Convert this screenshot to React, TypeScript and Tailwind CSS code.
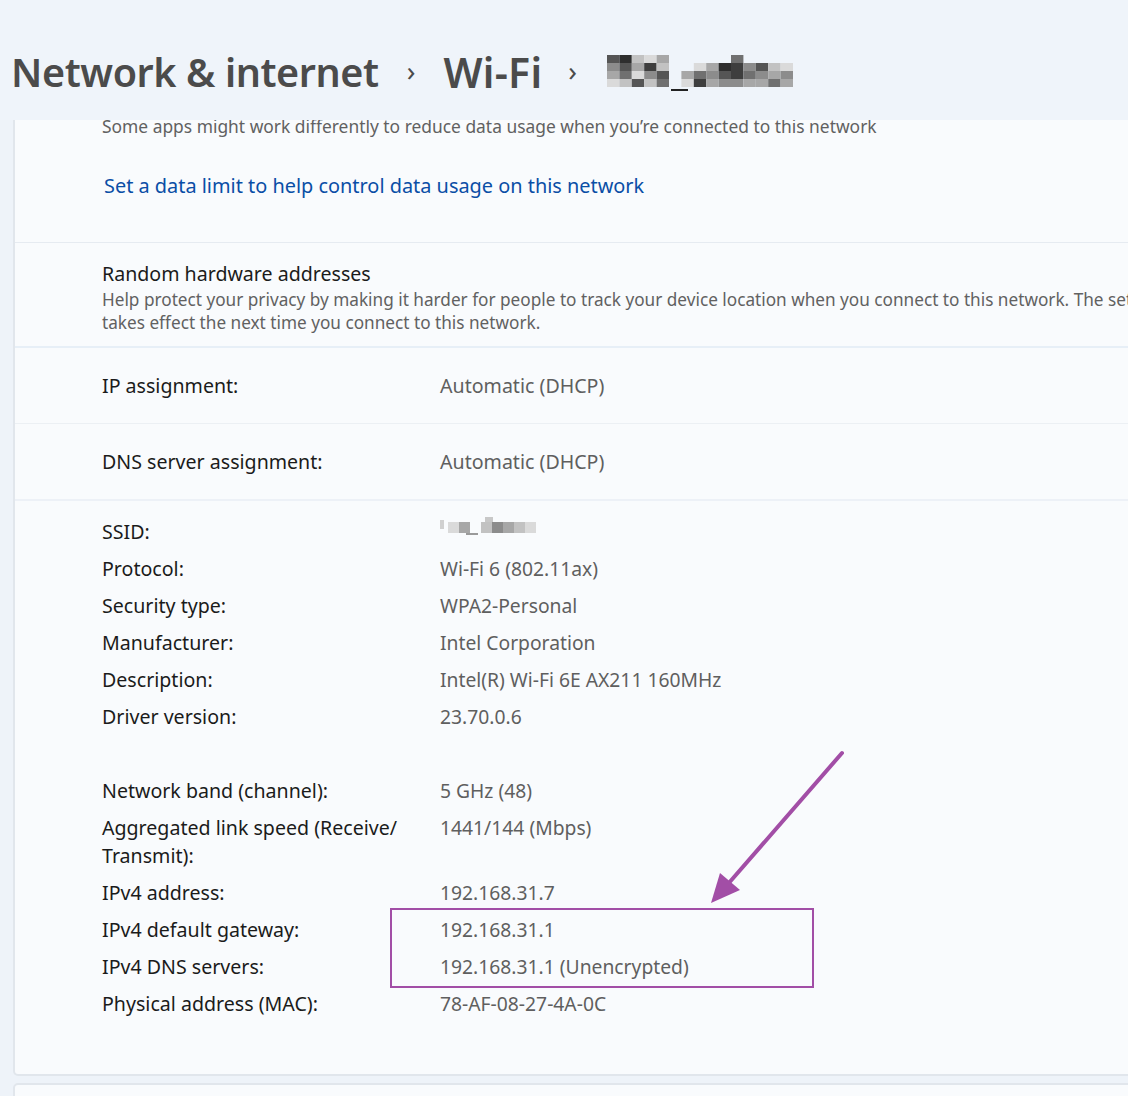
import React from 'react';

const font = { fontFamily: '"Noto Sans", "Open Sans", sans-serif' };

// Blurred SSID mosaics, each cell a shade of gray (0 = empty)
const titleMosaic = [
  [3, 1, 7, 8, 6, 0, 0, 0, 0, 0, 4, 0, 0, 0, 0],
  [5, 3, 6, 2, 7, 0, 0, 8, 6, 1, 2, 5, 3, 7, 8],
  [6, 4, 8, 5, 3, 0, 6, 4, 5, 3, 2, 4, 5, 6, 5],
  [8, 7, 3, 7, 4, 0, 8, 2, 6, 5, 5, 6, 6, 4, 6],
];

const shade = (v: number) => ['', '#2e2e2e', '#3e3e3e', '#555', '#707070', '#8c8c8c', '#a7a7a7', '#c2c2c2', '#dadada'][v];

function Mosaic() {
  return (
    <svg width="190" height="44" viewBox="0 0 190 44">
      {titleMosaic.map((row, r) =>
        row.map((v, c) =>
          v ? <rect key={`${r}-${c}`} x={c * 12.4} y={4 + r * 8} width="12.4" height="8" fill={shade(v)} /> : null
        )
      )}
      <rect x="64" y="38" width="17" height="2" fill="#222" />
    </svg>
  );
}

function SmallMosaic() {
  const cells = [8, 6, 0, 7, 5, 6, 7, 8];
  return (
    <svg width="100" height="22" viewBox="0 0 100 22" className="mt-[-2px]">
      <rect x="0" y="4" width="4" height="9" fill="#d0d0d0" />
      {cells.map((v, i) =>
        v ? <rect key={i} x={8 + i * 11} y={6} width="11" height="11" fill={shade(v)} /> : null
      )}
      <rect x="26" y="17" width="12" height="2" fill="#9a9a9a" />
      <rect x="45" y="1" width="8" height="5" fill="#c8c8c8" />
    </svg>
  );
}

const props1 = [
  ['SSID:', null],
  ['Protocol:', 'Wi-Fi 6 (802.11ax)'],
  ['Security type:', 'WPA2-Personal'],
  ['Manufacturer:', 'Intel Corporation'],
  ['Description:', 'Intel(R) Wi-Fi 6E AX211 160MHz'],
  ['Driver version:', '23.70.0.6'],
];

const props2 = [
  ['Network band (channel):', '5 GHz (48)'],
  ['Aggregated link speed (Receive/ Transmit):', '1441/144 (Mbps)'],
  ['IPv4 address:', '192.168.31.7'],
  ['IPv4 default gateway:', '192.168.31.1'],
  ['IPv4 DNS servers:', '192.168.31.1 (Unencrypted)'],
  ['Physical address (MAC):', '78-AF-08-27-4A-0C'],
];

function PropRow({ label, value }: { label: string; value: string | null }) {
  return (
    <div className="flex text-[19.6px] leading-[28px] py-[4.5px]">
      <div className="w-[338px] shrink-0 pr-6 text-[#1b1b1b]">{label}</div>
      <div className="text-[19.3px] text-[#5f5f5f]">{value ?? <SmallMosaic />}</div>
    </div>
  );
}

export default function App() {
  return (
    <div className="w-[1128px] h-[1096px] overflow-hidden bg-[#eef3f9] relative" style={font}>
      {/* Breadcrumb header */}
      <div className="h-[120px] flex items-center pl-[11px] pt-[26px] relative z-10 bg-[#eff4fa]">
        <span className="text-[39.5px] font-semibold text-[#4b4b4b] tracking-[-0.4px]">Network &amp; internet</span>
        <span className="text-[28px] text-[#4b4b4b] ml-[28px] mr-[28px] -mt-[6px]">›</span>
        <span className="text-[41px] font-semibold text-[#4b4b4b] tracking-[0.3px]">Wi-Fi</span>
        <span className="text-[28px] text-[#4b4b4b] ml-[26px] mr-[30px] -mt-[6px]">›</span>
        <Mosaic />
      </div>

      {/* Card content, its top scrolled under the header */}
      <div className="ml-[13px] -mt-[12px] border-l-2 border-r-2 border-b-2 border-[#e1e6ec] rounded-b-[5px] bg-[#f9fbfd] w-[1130px]">
        {/* Metered connection section */}
        <div className="pl-[87px] pt-[6px] h-[135px] border-b border-[#e6ebf1]">
          <p className="text-[17.4px] leading-[24px] text-[#616161] whitespace-nowrap">
            Some apps might work differently to reduce data usage when you’re connected to this network
          </p>
          <p className="mt-[36px] ml-[2px] text-[19.9px] leading-[24px] text-[#0a4ea6]">
            Set a data limit to help control data usage on this network
          </p>
        </div>

        {/* Random hardware addresses */}
        <div className="pl-[87px] h-[105px] pt-[18px] border-b-2 border-[#e7eff7]">
          <p className="text-[19.6px] leading-[26px] text-[#1b1b1b]">Random hardware addresses</p>
          <p className="mt-[1px] text-[17.2px] leading-[23px] text-[#616161] whitespace-nowrap">
            Help protect your privacy by making it harder for people to track your device location when you connect to this network. The setting
          </p>
          <p className="text-[17.2px] leading-[23px] text-[#616161]">takes effect the next time you connect to this network.</p>
        </div>

        {/* IP assignment */}
        <div className="pl-[87px] h-[76px] flex items-center border-b border-[#ecf0f4]">
          <div className="w-[338px] text-[19.6px] text-[#1b1b1b]">IP assignment:</div>
          <div className="text-[19.6px] text-[#5f5f5f]">Automatic (DHCP)</div>
        </div>

        {/* DNS server assignment */}
        <div className="pl-[87px] h-[77px] flex items-center border-b-2 border-[#edf1f7]">
          <div className="w-[338px] text-[19.6px] text-[#1b1b1b]">DNS server assignment:</div>
          <div className="text-[19.6px] text-[#5f5f5f]">Automatic (DHCP)</div>
        </div>

        {/* Properties */}
        <div className="pl-[87px] pt-[12px] h-[573px]">
          {props1.map(([l, v]) => (
            <PropRow key={l as string} label={l as string} value={v} />
          ))}
          <div className="h-[37px]" />
          {props2.map(([l, v]) => (
            <PropRow key={l as string} label={l as string} value={v} />
          ))}
        </div>
      </div>

      {/* Next card peeking at the bottom */}
      <div className="ml-[13px] mt-[7px] h-[40px] border-2 border-[#e1e6ec] rounded-t-[5px] bg-[#f9fbfd] w-[1130px]" />

      {/* Annotation: highlight box and arrow */}
      <div className="absolute left-[390px] top-[908px] w-[424px] h-[80px] border-2 border-[#a24ea6]" />
      <svg className="absolute left-0 top-0 pointer-events-none" width="1128" height="1096">
        <line x1="842" y1="753" x2="728" y2="884" stroke="#a24ea6" strokeWidth="4" strokeLinecap="round" />
        <polygon points="711,903 720,873 740,890" fill="#a24ea6" />
      </svg>
    </div>
  );
}
